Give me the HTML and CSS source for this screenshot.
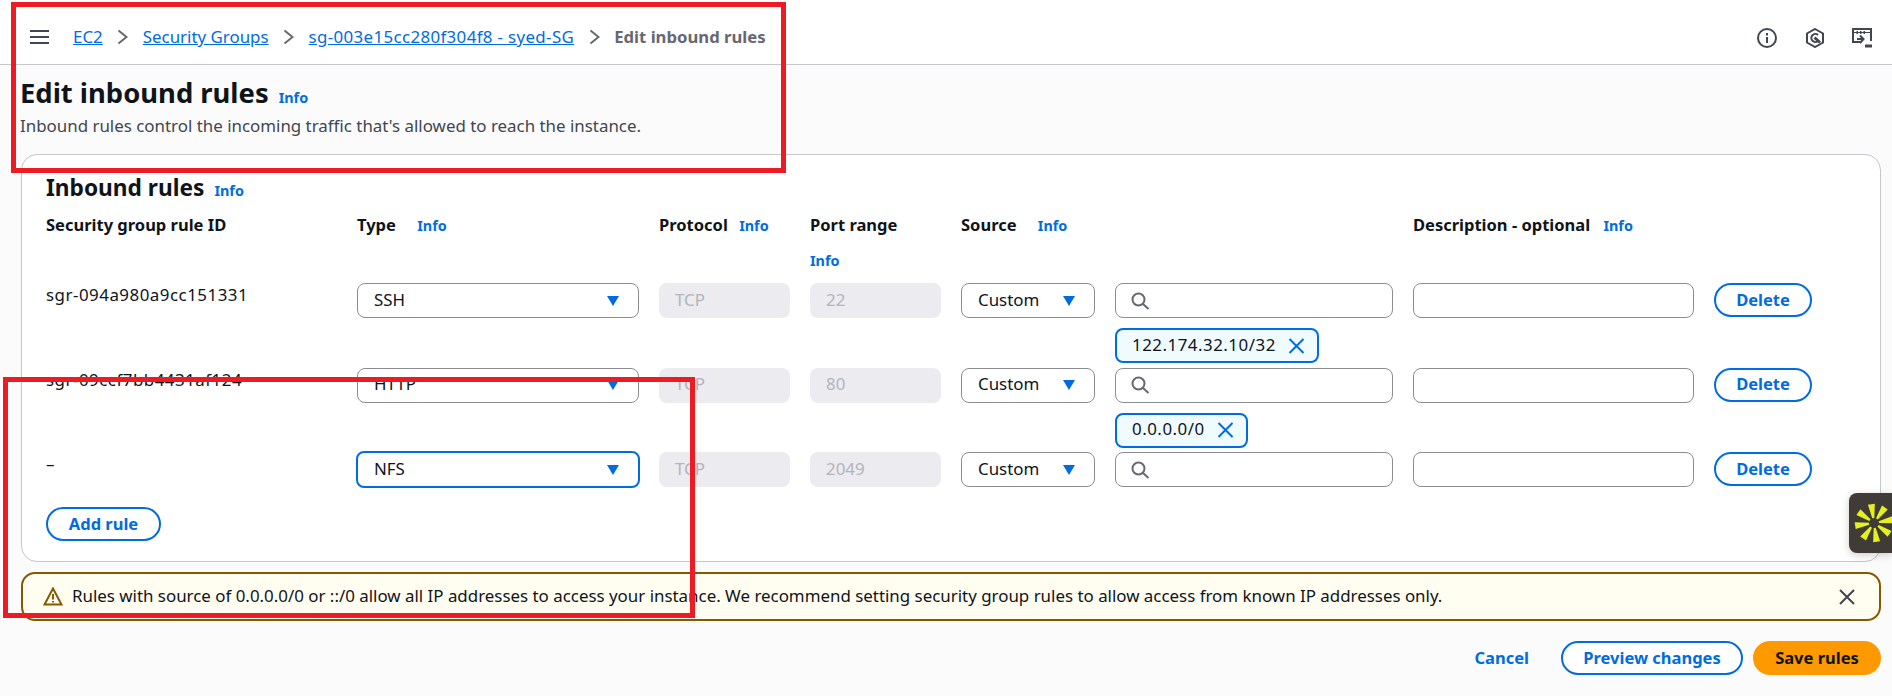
FILE: index.html
```html
<!DOCTYPE html>
<html lang="en">

<head>
    <meta charset="UTF-8">
    <title>Edit inbound rules</title>
    <link rel="stylesheet" href="styles.css">
</head>

<body>

    <header class="topbar">
        <svg class="menu-icon" width="19" height="16" viewBox="0 0 19 16"><path d="M0 2h19M0 8h19M0 14h19"/></svg>
        <nav class="crumbs">
            <a href="#">EC2</a>
            <svg class="chevron" width="11" height="16" viewBox="0 0 11 16"><path d="M1.5 1.5 9.5 8l-8 6.5"/></svg>
            <a href="#">Security Groups</a>
            <svg class="chevron" width="11" height="16" viewBox="0 0 11 16"><path d="M1.5 1.5 9.5 8l-8 6.5"/></svg>
            <a class="crumb-sg" href="#">sg-003e15cc280f304f8 - syed-SG</a>
            <svg class="chevron" width="11" height="16" viewBox="0 0 11 16"><path d="M1.5 1.5 9.5 8l-8 6.5"/></svg>
            <span class="crumb-current">Edit inbound rules</span>
        </nav>
        <div class="top-icons">
            <svg width="20" height="20" viewBox="0 0 20 20"><circle cx="10" cy="10" r="9"/><path d="M10 9v6M10 5v2.4"/></svg>
            <svg width="20" height="20" viewBox="0 0 20 20"><path d="M10 1l8 4.5v9L10 19l-8-4.500v-9z"/><path d="M13 7a4 4 0 1 0 0 6"/><path class="thick" d="M9.500 9.500l5.500 5"/></svg>
            <svg width="20" height="20" viewBox="0 0 20 20"><path d="M8 14H1V1h18v12"/><path d="M1 4.500h18" class="thin"/><path class="thick" d="M4.500 4.500h1.500M8 4.500h1.500M11.500 4.500h1.500"/><path d="M5 11h6M8 7.500l3.500 3.500L8 15"/><path class="thick" d="M13 18h7"/></svg>
        </div>
    </header>

    <main class="page">
        <div class="title-row">
            <h1>Edit inbound rules</h1>
            <a class="info" href="#">Info</a>
        </div>
        <p class="subtitle">Inbound rules control the incoming traffic that's allowed to reach the instance.</p>

        <section class="card">
            <div class="card-head">
                <h2>Inbound rules</h2>
                <a class="info" href="#">Info</a>
            </div>

            <div class="rule-grid head-row">
                <div class="col-label">Security group rule ID</div>
                <div class="col-label">Type <a class="info info-far" href="#">Info</a></div>
                <div class="col-label">Protocol <a class="info" href="#">Info</a></div>
                <div class="col-label">Port range <a class="info info-below" href="#">Info</a></div>
                <div class="col-label">Source <a class="info info-far" href="#">Info</a></div>
                <div></div>
                <div class="col-label">Description - optional <a class="info info-desc" href="#">Info</a></div>
            </div>

            <div class="rule-grid rule-row">
                <div class="rule-id">sgr-094a980a9cc151331</div>
                <div class="select">SSH<span class="caret"></span></div>
                <div class="readonly">TCP</div>
                <div class="readonly">22</div>
                <div class="select">Custom<span class="caret"></span></div>
                <div>
                    <div class="search">
                        <svg width="19" height="18" viewBox="0 0 19 18"><circle cx="7.500" cy="7.500" r="6"/><path d="M12 12l5.500 5"/></svg>
                    </div>
                    <div class="token">122.174.32.10/32
                        <svg width="17" height="16" viewBox="0 0 17 16"><path d="M1.500 1l14 14M15.500 1l-14 14"/></svg>
                    </div>
                </div>
                <div class="text-input"></div>
                <button class="btn">Delete</button>
            </div>

            <div class="rule-grid rule-row">
                <div class="rule-id">sgr-09ccf7bb4431af124</div>
                <div class="select">HTTP<span class="caret"></span></div>
                <div class="readonly">TCP</div>
                <div class="readonly">80</div>
                <div class="select">Custom<span class="caret"></span></div>
                <div>
                    <div class="search">
                        <svg width="19" height="18" viewBox="0 0 19 18"><circle cx="7.500" cy="7.500" r="6"/><path d="M12 12l5.500 5"/></svg>
                    </div>
                    <div class="token">0.0.0.0/0
                        <svg width="17" height="16" viewBox="0 0 17 16"><path d="M1.500 1l14 14M15.500 1l-14 14"/></svg>
                    </div>
                </div>
                <div class="text-input"></div>
                <button class="btn">Delete</button>
            </div>

            <div class="rule-grid rule-row">
                <div class="rule-id">–</div>
                <div class="select select-focus">NFS<span class="caret"></span></div>
                <div class="readonly">TCP</div>
                <div class="readonly">2049</div>
                <div class="select">Custom<span class="caret"></span></div>
                <div>
                    <div class="search">
                        <svg width="19" height="18" viewBox="0 0 19 18"><circle cx="7.500" cy="7.500" r="6"/><path d="M12 12l5.500 5"/></svg>
                    </div>
                </div>
                <div class="text-input"></div>
                <button class="btn">Delete</button>
            </div>

            <button class="btn add-rule">Add rule</button>
        </section>

        <div class="alert">
            <svg class="alert-icon" width="20" height="19" viewBox="0 0 20 19"><path d="M10 1.500 1.500 17.500h17z"/><path d="M10 7v5.500M10 14v1.600"/></svg>
            <span class="alert-text">Rules with source of 0.0.0.0/0 or ::/0 allow all IP addresses to access your instance. We recommend setting security group rules to allow access from known IP addresses only.</span>
            <svg class="alert-close" width="16" height="16" viewBox="0 0 16 16"><path d="M1 1l14 14M15 1 1 15"/></svg>
        </div>

        <div class="actions">
            <a class="cancel" href="#">Cancel</a>
            <button class="btn btn-preview">Preview changes</button>
            <button class="btn btn-primary">Save rules</button>
        </div>
    </main>

    <!-- floating help widget -->
    <div class="widget">
        <svg width="43" height="60" viewBox="0 0 43 60">
            <g transform="translate(25 30)">
                <polygon points="-1,-5 1,-5 3.500,-19 -3.500,-19" transform="rotate(-8)"/>
                <polygon points="-1,-5 1,-5 3.500,-19 -3.500,-19" transform="rotate(35)"/>
                <polygon points="-1,-5 1,-5 3.500,-19 -3.500,-19" transform="rotate(80)"/>
                <polygon points="-1,-5 1,-5 3.500,-19 -3.500,-19" transform="rotate(125)"/>
                <polygon points="-1,-5 1,-5 3.500,-19 -3.500,-19" transform="rotate(172)"/>
                <polygon points="-1,-5 1,-5 3.500,-19 -3.500,-19" transform="rotate(215)"/>
                <polygon points="-1,-5 1,-5 3.500,-19 -3.500,-19" transform="rotate(262)"/>
                <polygon points="-1,-5 1,-5 3.500,-19 -3.500,-19" transform="rotate(305)"/>
            </g>
        </svg>
    </div>

    <!-- red annotation boxes drawn over the screenshot -->
    <div class="mark mark-top"></div>
    <div class="mark mark-bottom"></div>

</body>

</html>
```

FILE: styles.css
```css
body {
    font-family: 'Noto Sans', sans-serif;
    font-size: 16.9px;
    line-height: 24px;
    margin: 0;
    background-color: #fbfbfb;
    color: #0f141a;
    height: 696px;
    overflow: hidden;
    position: relative;
}

a {
    color: #006ce0;
}

/* top bar */
.topbar {
    display: flex;
    align-items: center;
    padding: 10px 20px 0 30px;
    height: 54px;
    background-color: #fff;
    border-bottom: 1px solid #c6c6cd;
}

.menu-icon {
    fill: none;
    stroke: #424650;
    stroke-width: 2;
    margin-right: 24px;
}

.crumbs {
    display: flex;
    align-items: center;
    gap: 14.5px;
}

.crumb-sg {
    letter-spacing: 0.35px;
}

.chevron {
    fill: none;
    stroke: #656871;
    stroke-width: 2;
}

.crumb-current {
    font-size: 16.7px;
    font-weight: 700;
    color: #656871;
}

.top-icons {
    display: flex;
    gap: 27.5px;
    margin-top: 2px;
    margin-left: auto;
}

.top-icons svg {
    fill: none;
    stroke: #424650;
    stroke-width: 2;
}

.top-icons .thick {
    stroke-width: 3;
}

.top-icons .thin {
    stroke-width: 1;
}

/* page */
.page {
    padding: 11px 11px 0 21px;
}

.title-row {
    display: flex;
    align-items: baseline;
    gap: 10px;
    margin-left: -1px;
}

h1 {
    font-size: 27.4px;
    line-height: 34px;
    margin: 0;
}

h2 {
    font-size: 22.7px;
    line-height: 30px;
    margin: 0;
}

.subtitle {
    margin: 4px 0 16px -1px;
    color: #424650;
}

.info {
    font-size: 14.4px;
    line-height: 16px;
    font-weight: 700;
    text-decoration: none;
}

.col-label .info {
    margin-left: 7px;
}

.col-label .info-far {
    margin-left: 17px;
}

.col-label .info-desc {
    margin-left: 9px;
}

.col-label .info-below {
    display: block;
    margin: 12px 0 0;
    line-height: 24px;
}

.card {
    background-color: #fff;
    border: 1px solid #c6c6cd;
    border-radius: 16px;
    padding: 18px 24px 20px;
}

.card-head {
    display: flex;
    align-items: baseline;
    gap: 10px;
}

.rule-grid {
    display: grid;
    grid-template-columns: 291px 282px 131px 131px 134px 278px 281px 98px;
    column-gap: 20px;
    align-items: start;
}

.head-row {
    margin-top: 10px;
    margin-bottom: 10px;
}

.col-label {
    font-size: 16.5px;
    font-weight: 700;
}

.rule-id {
    letter-spacing: 0.5px;
}

.rule-row {
    margin-bottom: 4.5px;
}

.select,
.readonly,
.search,
.text-input {
    box-sizing: border-box;
    height: 35px;
    border-radius: 8px;
}

.select {
    display: flex;
    align-items: center;
    justify-content: space-between;
    padding: 0 19px 2px 16px;
    background-color: #fff;
    border: 1px solid #8c8c94;
}

.select-focus {
    border: 2px solid #006ce0;
    margin: -1px;
    height: 37px;
}

.caret {
    width: 0;
    height: 0;
    margin-top: 2px;
    border-left: 6.5px solid transparent;
    border-right: 6.5px solid transparent;
    border-top: 10px solid #006ce0;
}

.readonly {
    display: flex;
    align-items: center;
    padding: 0 16px 2px;
    background-color: #ebebf0;
    color: #b4b4bb;
}

.search {
    display: flex;
    align-items: center;
    padding: 0 15px;
    background-color: #fff;
    border: 1px solid #8c8c94;
}

.search svg {
    fill: none;
    stroke: #656871;
    stroke-width: 2;
}

.text-input {
    background-color: #fff;
    border: 1px solid #8c8c94;
}

.token {
    display: inline-flex;
    align-items: center;
    gap: 12px;
    box-sizing: border-box;
    height: 35px;
    margin-top: 10px;
    padding: 0 12px 2px 15px;
    background-color: #f0fbff;
    border: 2px solid #006ce0;
    border-radius: 8px;
    vertical-align: top;
    letter-spacing: 0.5px;
}

.token svg {
    fill: none;
    stroke: #006ce0;
    stroke-width: 2;
    margin-top: 2px;
}

.btn {
    box-sizing: border-box;
    height: 34px;
    padding: 0 20px 2px;
    font-family: inherit;
    font-size: 16.5px;
    font-weight: 700;
    color: #006ce0;
    background-color: #fff;
    border: 2px solid #006ce0;
    border-radius: 20px;
    cursor: pointer;
}

.add-rule {
    width: 115px;
    padding: 0 0 2px;
    margin-top: 20px;
    display: block;
}

.rule-row .btn {
    padding: 0 0 2px;
    width: 98px;
}

/* warning */
.alert {
    display: flex;
    align-items: center;
    box-sizing: border-box;
    height: 49px;
    margin-top: 10px;
    padding: 0 24px 0 20px;
    background-color: #fffef0;
    border: 2px solid #855900;
    border-radius: 14px;
}

.alert-icon {
    fill: none;
    stroke: #855900;
    stroke-width: 2;
    margin-right: 9px;
}

.alert-text {
    flex: 1;
    margin-bottom: 2px;
}

.alert-close {
    fill: none;
    stroke: #424650;
    stroke-width: 2;
}

.actions {
    display: flex;
    align-items: center;
    justify-content: flex-end;
    gap: 10px;
    margin-top: 20px;
}

.cancel {
    font-size: 16.5px;
    font-weight: 700;
    text-decoration: none;
    margin-right: 22px;
}

.btn-preview {
    width: 182px;
    padding: 0 0 2px;
}

.btn-primary {
    width: 128px;
    padding: 0 0 2px;
    color: #0f141a;
    background-color: #ff9900;
    border-color: #ff9900;
}

/* overlays */
.widget {
    position: absolute;
    left: 1849px;
    top: 493px;
    width: 43px;
    height: 60px;
    background-color: #3f3c38;
    border-radius: 8px 0 0 8px;
    box-shadow: 0 2px 8px rgba(0, 0, 0, 0.2);
}

.widget svg {
    display: block;
    fill: #e6f01e;
}

.mark {
    position: absolute;
    box-sizing: border-box;
    border: 5px solid #ed1c24;
}

.mark-top {
    left: 11px;
    top: 2px;
    width: 775px;
    height: 171px;
}

.mark-bottom {
    left: 3px;
    top: 377px;
    width: 692px;
    height: 241px;
}
```
